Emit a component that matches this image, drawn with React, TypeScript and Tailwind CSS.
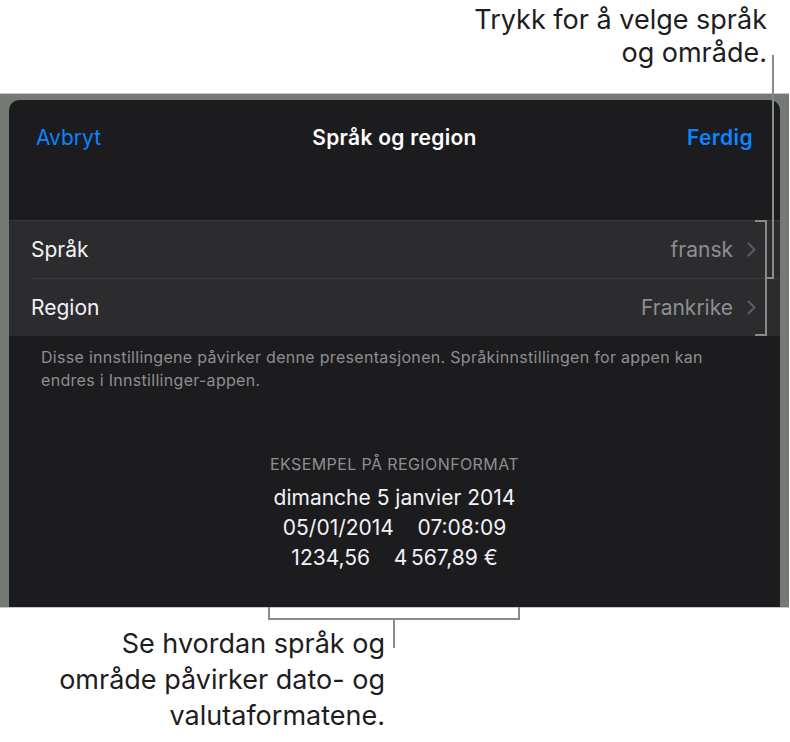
const rows = [
  { label: 'Språk', value: 'fransk' },
  { label: 'Region', value: 'Frankrike' },
];

function Chevron() {
  return (
    <svg width={9} height={15} viewBox="0 0 9 15" fill="none" stroke="#5b5b60" strokeWidth={2.2} strokeLinecap="round" strokeLinejoin="round">
      <path d="M1.5 1.5 L7.5 7.5 L1.5 13.5" />
    </svg>
  );
}

function Row({ label, value }: { label: string; value: string }) {
  return (
    <div className="flex h-[57px] items-center justify-between pl-[22px] pr-[24px]">
      <span className="text-[21px] text-[#f2f2f7]">{label}</span>
      <div className="flex items-center gap-[14px]">
        <span className="text-[21px] text-[#8e8e93]">{value}</span>
        <Chevron />
      </div>
    </div>
  );
}

function Callouts() {
  // leader lines over the screenshot
  return (
    <svg className="pointer-events-none absolute left-0 top-0" width={790} height={742} fill="none" stroke="#8a8a8a" strokeWidth={2}>
      <path d="M773 55 V278 H765" />
      <path d="M755 221 H766 V335 H755" />
      <path d="M269 607 V619 H519 V607" />
      <path d="M394 619 V648" />
    </svg>
  );
}

export default function App() {
  return (
    <div className="relative h-[742px] w-[790px] overflow-hidden bg-white font-['Inter','Liberation_Sans',sans-serif]">
      <div className="h-[93px] pr-[23px] pt-[3px] text-right text-[27px] leading-[33px] text-[#1d1d1f]">
        <p>Trykk for å velge språk</p>
        <p>og område.</p>
      </div>

      <div className="w-[789px] border-y border-[#c6c6c6] bg-[#757a74] px-[9px] pt-[6px]">
        <div className="h-[507px] rounded-t-[10px] bg-[#1c1c1e]">
          <div className="grid h-[76px] grid-cols-3 items-center px-[27px] text-[21px]">
            <span className="text-[#0a84ff]">Avbryt</span>
            <span className="whitespace-nowrap text-center font-semibold tracking-[0.3px] text-white">Språk og region</span>
            <span className="text-right font-semibold tracking-[0.4px] text-[#0a84ff]">Ferdig</span>
          </div>

          <div className="mt-[44px] border-t border-[#3a3a3c] bg-[#2c2c2e]">
            <Row {...rows[0]} />
            <div className="ml-[21px] h-px bg-[#3a3a3c]" />
            <Row {...rows[1]} />
          </div>

          <p className="px-[32px] pt-[10px] text-[16px] leading-[23px] tracking-[0.3px] text-[#8e8e93]">
            Disse innstillingene påvirker denne presentasjonen. Språkinnstillingen for appen kan endres i Innstillinger-appen.
          </p>

          <div className="mt-[61px] text-center">
            <p className="text-[16px] leading-[22px] tracking-[0.4px] text-[#8e8e93]">EKSEMPEL PÅ REGIONFORMAT</p>
            <div className="mt-[8px] text-[21px] leading-[30px] text-[#f2f2f7]">
              <p>dimanche 5 janvier 2014</p>
              <p>05/01/2014&nbsp;&nbsp;&nbsp;&nbsp;07:08:09</p>
              <p>1234,56&nbsp;&nbsp;&nbsp;&nbsp;4&#8239;567,89&nbsp;€</p>
            </div>
          </div>
        </div>
      </div>

      <div className="mt-[18px] pr-[405px] text-right text-[27px] leading-[36px] text-[#1d1d1f]">
        <p>Se hvordan språk og</p>
        <p>område påvirker dato- og</p>
        <p>valutaformatene.</p>
      </div>

      <Callouts />
    </div>
  );
}
